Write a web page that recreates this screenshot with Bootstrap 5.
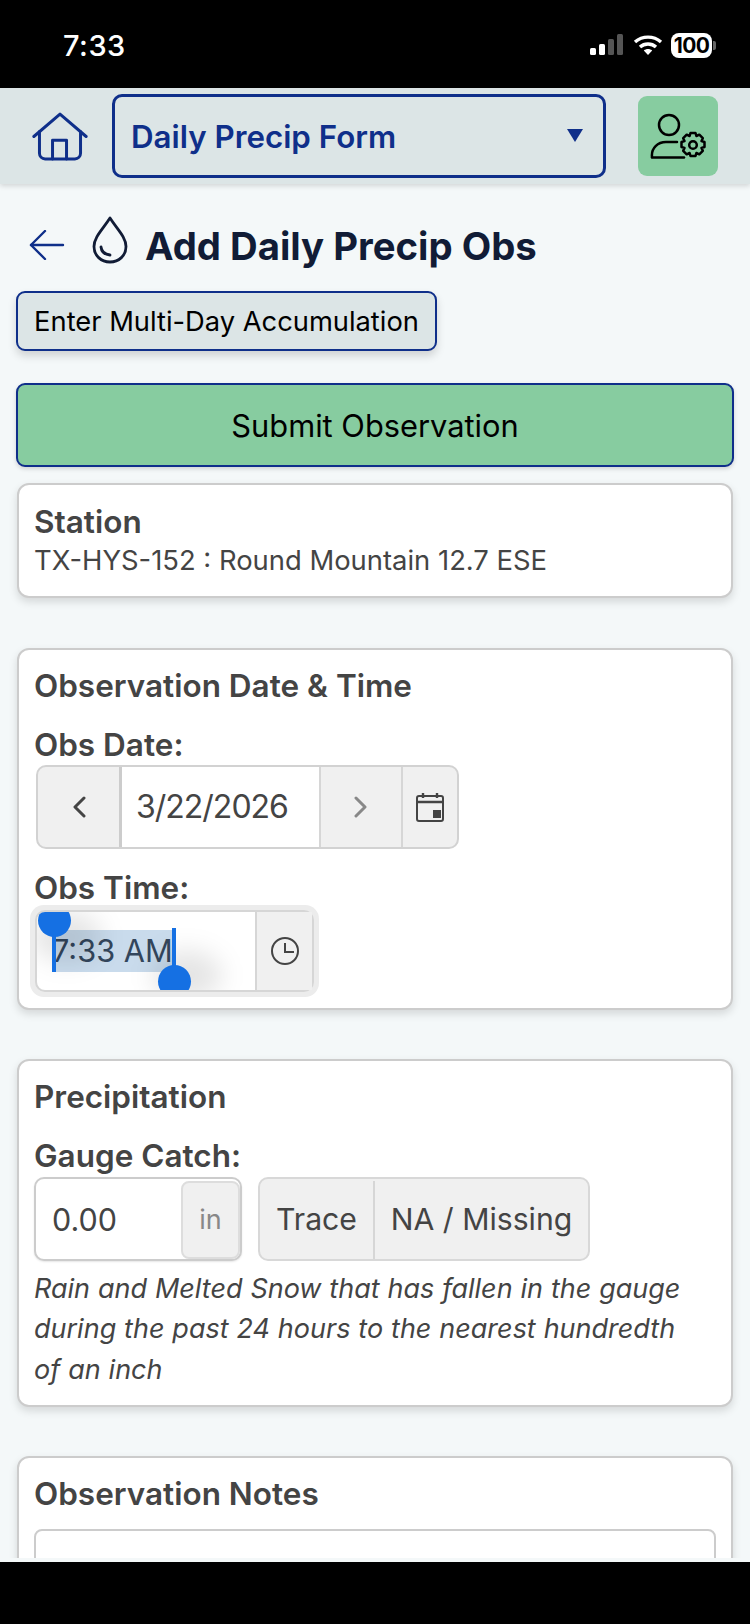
<!DOCTYPE html>
<html lang="en">
<head>
<meta charset="utf-8">
<title>Daily Precip Form</title>
<link href="https://cdn.jsdelivr.net/npm/bootstrap@5.3.0/dist/css/bootstrap.min.css" rel="stylesheet">
<style>
html,body{height:1624px;overflow:hidden}
body{font-family:Inter,"Liberation Sans",sans-serif;background:#000;color:#444;display:flex;flex-direction:column}
.status-bar{height:88px;flex:none;background:#000;color:#fff;padding:2px 34px 0 63px}
.status-time{font-size:29px;font-weight:500;line-height:1;letter-spacing:.5px}
.battery{width:41px;height:25px;background:#fff;color:#000;border-radius:8px;font-size:21px;font-weight:700;line-height:25px;text-align:center;letter-spacing:-.6px}
.battery-tip{width:3px;height:9px;background:#666;border-radius:0 2px 2px 0;margin-left:1px}
.app-bar{height:96px;flex:none;background:#dce5e6;box-shadow:0 2px 5px rgba(0,0,0,.14);position:relative;z-index:2;padding:6px 32px 0 32px}
.app-bar .home-ico{width:56px;margin-top:18px;flex:none}
.form-pick{width:494px;height:84px;margin:0 32px 0 24px;border:3px solid #0f2f8a;border-radius:10px;background:#dce5e6;color:#0f2f8a;font-size:31.3px;font-weight:600;padding:2px 20px 0 16px}
.caret-down{width:0;height:0;border-left:8px solid transparent;border-right:8px solid transparent;border-top:13px solid #0f2f8a;margin-bottom:4px}
.gear-btn{width:80px;height:80px;background:#87cca0;border:0;border-radius:9px;margin-top:2px;padding:0}
.page-body{flex:1;min-height:0;overflow:hidden;background:#f4f8f9;padding:0 16px;border-bottom:4px solid #f4f8f9}
.title-row{height:107px;padding:14px 0 0 13px}
.title-row h1{font-size:38.3px;font-weight:700;color:#111c36;margin:0 0 0 17px;padding-top:4px;white-space:nowrap}
.back-ico{width:36px;flex:none}
.drop-ico{margin:-10px 0 0 27px;flex:none}
.multi-btn{height:60px;width:421px;border:2px solid #0f2f8a;border-radius:9px;background:#dce5e6;color:#000;font-size:27.3px;padding:3px 0 0;box-shadow:0 5px 9px rgba(0,0,0,.15);display:block}
.submit-btn{height:84px;width:718px;margin-top:32px;border:2px solid #0f2f8a;border-radius:9px;background:#87cca0;color:#000;font-size:30.8px;padding:2px 0 0;display:block;box-shadow:0 2px 4px rgba(0,0,0,.15)}
.obs-card{border:2px solid #ccc;border-radius:12px;background:#fff;color:#444;box-shadow:0 4px 8px rgba(0,0,0,.13);margin:0 1px;width:716px}
.obs-card .card-body{padding:16px 15px 0}
.station-card{height:115px;margin-top:16px}
.station-card .card-body{padding-top:17px}
.date-card{height:362px;margin-top:50px}
.precip-card{height:348px;margin-top:49px}
.notes-card{height:200px;margin-top:49px}
.card-head{font-size:31.5px;font-weight:600;line-height:40px;margin:0}
.field-label{font-size:31.5px;font-weight:600;line-height:40px;margin:19px 0 0;display:block}
.station-line{font-size:27.4px;line-height:36px;margin:0}
.seg-group{border:2px solid #d2d2d2;border-radius:10px;background:#f0f0f0;height:84px;font-size:31px;color:#444}
.seg{height:100%;display:flex;align-items:center;justify-content:center}
.seg+.seg{border-left:2px solid #d6d6d6}
.date-group{width:423px;margin:0 0 0 2px;overflow:hidden}
.date-prev{width:81px}
.date-val{width:200px;background:#fff;font-size:32px;letter-spacing:-1px;border-left:3px solid #ccc!important;justify-content:flex-start;padding-left:14px}
.date-next{width:82px}.date-cal{flex:1}
.time-label{margin-top:19px}
.time-ring{width:289px;height:92px;border-radius:14px;background:#ececec;padding:5px;margin:-3px 0 0 -4px}
.time-group{height:82px;background:#fff;border-color:#d6d6d6;position:relative;width:279px}
.time-val{width:218px;justify-content:flex-start;padding-left:15px;position:relative;font-size:30.7px;color:#33465c}
.time-sel{background:#c9dbec;line-height:42px;height:42px;padding:0 3px 0 0;display:block;margin-top:-1px;white-space:nowrap}
.time-btn{flex:1;background:#f0f0f0}
.sel-bar{position:absolute;background:#1570e3;width:4px}
.sel-dot{position:absolute;width:33px;height:33px;background:#1570e3;border-radius:50%}
.sel-clip{position:absolute;inset:0;overflow:hidden;border-radius:8px;pointer-events:none}
.sel-shadow{position:absolute;width:70px;height:50px;border-radius:50%;background:rgba(0,0,0,.10);filter:blur(12px)}
.gauge-row{gap:16px;margin-top:1px}
.gauge-group{width:208px;height:84px;background:#fff;border:2px solid #ccc;border-radius:10px;position:relative;font-size:30.5px;color:#444;padding:2px 0 0 16px;box-shadow:0 1px 2px rgba(0,0,0,.1)}
.unit-box{width:59px;height:78px;background:#f0f0f0;border:2px solid #ddd;border-radius:8px;color:#888;font-size:27px}
.miss-group{width:332px;border-color:#d8d8d8;font-size:30.2px;padding-top:2px}
.seg-trace{width:113px}.seg-na{flex:1}
.help-text{font-size:27px;font-style:italic;line-height:40.4px;margin:8px 0 0;max-width:655px;word-spacing:.3px}
.notes-box{height:120px;border:2px solid #ccc;border-radius:8px;background:#fff;margin-top:15px;width:682px}
.bottom-bar{height:62px;flex:none;background:#000}
</style>
</head>
<body>
<div class="status-bar d-flex align-items-center justify-content-between">
  <div class="status-time">7:33</div>
  <div class="d-flex align-items-center gap-2">
    <svg width="36" height="22" viewBox="0 0 36 22" aria-hidden="true"><rect x="1" y="14" width="6" height="7" rx="1.5" fill="#fff"/><rect x="10" y="10" width="6" height="11" rx="1.5" fill="#fff"/><rect x="19" y="5" width="6" height="16" rx="1.5" fill="#555"/><rect x="28" y="0" width="6" height="21" rx="1.5" fill="#555"/></svg>
    <svg width="30" height="22" viewBox="0 0 30 22" aria-hidden="true" fill="none" stroke="#fff" stroke-width="3.4"><path d="M2 8c7.500-6.500 18.500-6.500 26 0"/><path d="M7 13c4.500-4 11.500-4 16 0"/><path d="M15 21l-4.200-4.600c2.500-2 5.900-2 8.400 0z" fill="#fff" stroke="none"/></svg>
    <div class="d-flex align-items-center">
      <div class="battery">100</div><div class="battery-tip"></div>
    </div>
  </div>
</div>

<nav class="app-bar d-flex align-items-start">
  <svg class="home-ico" viewBox="0 0 60 52" height="49" aria-hidden="true" fill="none" stroke="#0f2f8a" stroke-width="3.2" stroke-linecap="round" stroke-linejoin="round"><path d="M2 26 30 2l28 24"/><path d="M8 21v23a6 6 0 0 0 6 6h32a6 6 0 0 0 6-6V21"/><path d="M22 50V30h15v20"/></svg>
  <button class="form-pick btn d-flex align-items-center justify-content-between" type="button"><span>Daily Precip Form</span><span class="caret-down"></span></button>
  <button class="gear-btn btn d-flex align-items-center justify-content-center" type="button" aria-label="User settings">
    <svg width="56" height="46" viewBox="0 0 56 46" aria-hidden="true" fill="none" stroke="#000" stroke-width="2.500" stroke-linecap="round" stroke-linejoin="round"><circle cx="19" cy="12" r="10"/><path d="M2 44c-1-9 6-15 14-15h11"/><path d="M2 44.500h32"/><circle cx="43" cy="32" r="3.800"/><path d="M40.500 20h5l.9 3 2.900-1.300 3.500 3.500-1.300 2.900 3 .9v5l-3 .9 1.300 2.900-3.500 3.500-2.900-1.300-.9 3h-5l-.9-3-2.900 1.300-3.500-3.500 1.300-2.900-3-.9v-5l3-.9-1.300-2.900 3.500-3.500 2.900 1.300z"/></svg>
  </button>
</nav>

<main class="page-body">
  <div class="title-row d-flex align-items-center">
    <svg class="back-ico" height="30" viewBox="0 0 36 30" aria-hidden="true" fill="none" stroke="#0f2f8a" stroke-width="2.400" stroke-linecap="round" stroke-linejoin="round"><path d="M16 1 2 15l14 14"/><path d="M2 15h32"/></svg>
    <svg class="drop-ico" width="36" height="48" viewBox="0 0 36 48" aria-hidden="true" fill="none" stroke="#111c36" stroke-width="2.800" stroke-linecap="round" stroke-linejoin="round"><path d="M18 2C11 13 2 21 2 30.500 2 39.500 9 46 18 46s16-6.500 16-15.500C34 21 25 13 18 2z"/><path d="M9 31c.5 4.500 3.500 7.500 9 8"/></svg>
    <h1>Add Daily Precip Obs</h1>
  </div>

  <button class="multi-btn btn" type="button">Enter Multi-Day Accumulation</button>
  <button class="submit-btn btn" type="button">Submit Observation</button>

  <section class="card obs-card station-card">
    <div class="card-body">
      <h2 class="card-head">Station</h2>
      <p class="station-line">TX-HYS-152 : Round Mountain 12.7 ESE</p>
    </div>
  </section>

  <section class="card obs-card date-card">
    <div class="card-body">
      <h2 class="card-head">Observation Date &amp; Time</h2>
      <label class="field-label">Obs Date:</label>
      <div class="seg-group date-group d-flex">
        <div class="seg date-prev"><svg width="14" height="22" viewBox="0 0 14 22" aria-hidden="true" fill="none" stroke="#444" stroke-width="3" stroke-linecap="round" stroke-linejoin="round"><path d="M12 2 3 11l9 9"/></svg></div>
        <div class="seg date-val">3/22/2026</div>
        <div class="seg date-next"><svg width="14" height="22" viewBox="0 0 14 22" aria-hidden="true" fill="none" stroke="#888" stroke-width="3" stroke-linecap="round" stroke-linejoin="round"><path d="M2 2l9 9-9 9"/></svg></div>
        <div class="seg date-cal"><svg width="28" height="30" viewBox="0 0 28 30" aria-hidden="true" fill="none" stroke="#444" stroke-width="2"><rect x="1" y="4" width="26" height="25" rx="2"/><path d="M1 10h26" stroke-width="2.400"/><path d="M7 1v5M21 1v5" stroke-width="2.400"/><rect x="17" y="18" width="8" height="8" fill="#444" stroke="none"/></svg></div>
      </div>
      <label class="field-label time-label">Obs Time:</label>
      <div class="time-ring">
        <div class="seg-group time-group d-flex">
          <div class="seg time-val">
            <span class="time-sel">7:33 AM</span>
          </div>
          <div class="seg time-btn"><svg width="28" height="28" viewBox="0 0 28 28" aria-hidden="true" fill="none" stroke="#444" stroke-width="2"><circle cx="14" cy="14" r="13"/><path d="M14 6v9h9"/></svg></div>
          <div class="sel-clip">
            <div class="sel-shadow" style="left:-5px;top:0"></div>
            <div class="sel-shadow" style="left:115px;top:38px"></div>
            <div class="sel-bar" style="left:15px;top:10px;height:50px"></div>
            <div class="sel-dot" style="left:1px;top:-8px"></div>
            <div class="sel-bar" style="left:135px;top:16px;height:42px"></div>
            <div class="sel-dot" style="left:121px;top:53px"></div>
          </div>
        </div>
      </div>
    </div>
  </section>

  <section class="card obs-card precip-card">
    <div class="card-body">
      <h2 class="card-head">Precipitation</h2>
      <label class="field-label">Gauge Catch:</label>
      <div class="d-flex gauge-row">
        <div class="gauge-group d-flex align-items-center justify-content-between">
          <span>0.00</span>
          <span class="unit-box d-flex align-items-center justify-content-center">in</span>
        </div>
        <div class="seg-group miss-group d-flex">
          <div class="seg seg-trace">Trace</div>
          <div class="seg seg-na">NA / Missing</div>
        </div>
      </div>
      <p class="help-text">Rain and Melted Snow that has fallen in the gauge during the past 24 hours to the nearest hundredth of an inch</p>
    </div>
  </section>

  <section class="card obs-card notes-card">
    <div class="card-body">
      <h2 class="card-head">Observation Notes</h2>
      <div class="notes-box"></div>
    </div>
  </section>
</main>
<div class="bottom-bar"></div>
<script src="https://cdn.jsdelivr.net/npm/bootstrap@5.3.0/dist/js/bootstrap.bundle.min.js"></script>
</body>
</html>
